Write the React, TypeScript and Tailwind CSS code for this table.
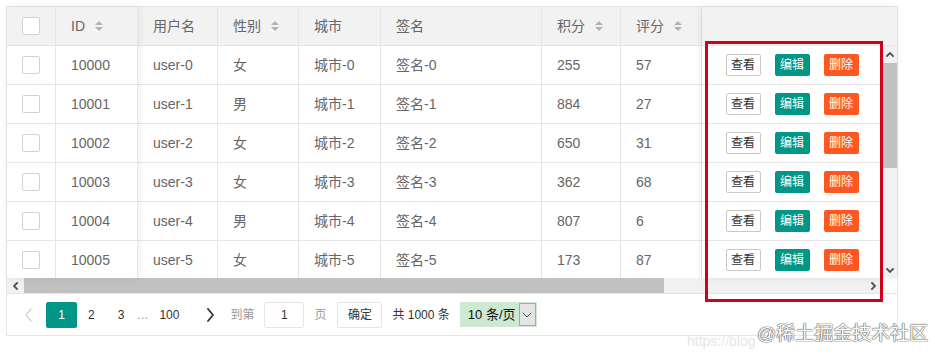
import React from 'react'

interface UserRow {
    id: number;
    sex: string;
    score: number;
    rating: number;
}

const rows: UserRow[] = [
    { id: 10000, sex: '女', score: 255, rating: 57 },
    { id: 10001, sex: '男', score: 884, rating: 27 },
    { id: 10002, sex: '女', score: 650, rating: 31 },
    { id: 10003, sex: '女', score: 362, rating: 68 },
    { id: 10004, sex: '男', score: 807, rating: 6 },
    { id: 10005, sex: '女', score: 173, rating: 87 },
]

function SortIcon() {
    return (
        <svg width="8" height="12" viewBox="0 0 8 12" className="ml-[10px] shrink-0">
            <polygon points="0,5 4,1 8,5" fill="#b2b2b2" />
            <polygon points="0,7 4,11 8,7" fill="#b2b2b2" />
        </svg>
    )
}

function Checkbox() {
    return <span className="block w-[18px] h-[18px] rounded-[2px] border border-[#d2d2d2] bg-white" />
}

function Cell({ w, children, last }: { w: string; children?: React.ReactNode; last?: boolean }) {
    return (
        <div className={`${w} h-full flex items-center px-[15px] shrink-0 ${last ? '' : 'border-r border-[#e6e6e6]'}`}>
            {children}
        </div>
    )
}

function Chevron({ dir, color, width }: { dir: 'left' | 'right' | 'up' | 'down'; color: string; width: number }) {
    const d = {
        left: 'M7 1 L2 7 L7 13',
        right: 'M2 1 L7 7 L2 13',
        up: 'M1 6 L5 2 L9 6',
        down: 'M1 2 L5 6 L9 2',
    }[dir]
    const box = dir === 'left' || dir === 'right' ? '0 0 9 14' : '0 0 10 8'
    return (
        <svg viewBox={box} className={dir === 'left' || dir === 'right' ? 'w-[9px] h-[14px]' : 'w-[10px] h-[8px]'}>
            <path d={d} fill="none" stroke={color} strokeWidth={width} strokeLinecap="round" strokeLinejoin="round" />
        </svg>
    )
}

// small arrows of the native scrollbars
function ScrollArrow({ dir }: { dir: 'left' | 'right' | 'up' | 'down' }) {
    const d = {
        left: 'M5 1 L2 4 L5 7',
        right: 'M2 1 L5 4 L2 7',
        up: 'M1 5 L4 2 L7 5',
        down: 'M1 3 L4 6 L7 3',
    }[dir]
    return (
        <svg viewBox="0 0 8 8" className="w-[8px] h-[8px]">
            <path d={d} fill="none" stroke="#505050" strokeWidth={1.8} strokeLinecap="square" />
        </svg>
    )
}

export default function App() {
    return (
        <div className="relative w-[935px] h-[359px] bg-white overflow-hidden font-['Liberation_Sans','Noto_Sans_CJK_SC',sans-serif] text-[14px] text-[#666]">
            <div className="relative ml-[6px] mt-[6px] w-[892px] border border-[#e6e6e6]">

                {/* table: fixed left, scrolling middle, fixed right */}
                <div className="flex h-[271px]">
                    <div className="relative z-10 w-[131px] shrink-0 bg-white shadow-[1px_0_8px_rgba(0,0,0,0.08)]">
                        <div className="flex h-[39px] bg-[#f2f2f2] border-b border-[#e6e6e6]">
                            <div className="w-[49px] h-full flex items-center justify-center border-r border-[#e6e6e6]"><Checkbox /></div>
                            <Cell w="w-[82px]"><span>ID</span><SortIcon /></Cell>
                        </div>
                        <div className="h-[232px] overflow-hidden">
                            {rows.map((r) => (
                                <div key={r.id} className="flex h-[39px] border-b border-[#e6e6e6]">
                                    <div className="w-[49px] h-full flex items-center justify-center border-r border-[#e6e6e6]"><Checkbox /></div>
                                    <Cell w="w-[82px]">{r.id}</Cell>
                                </div>
                            ))}
                        </div>
                    </div>

                    <div className="w-[564px] shrink-0 bg-white">
                        <div className="flex h-[39px] bg-[#f2f2f2] border-b border-[#e6e6e6]">
                            <Cell w="w-[80px]">用户名</Cell>
                            <Cell w="w-[81px]"><span>性别</span><SortIcon /></Cell>
                            <Cell w="w-[82px]">城市</Cell>
                            <Cell w="w-[161px]">签名</Cell>
                            <Cell w="w-[79px]"><span>积分</span><SortIcon /></Cell>
                            <Cell w="w-[81px]"><span>评分</span><SortIcon /></Cell>
                        </div>
                        <div className="h-[232px] overflow-hidden">
                            {rows.map((r, i) => (
                                <div key={r.id} className="flex h-[39px] border-b border-[#e6e6e6]">
                                    <Cell w="w-[80px]">user-{i}</Cell>
                                    <Cell w="w-[81px]">{r.sex}</Cell>
                                    <Cell w="w-[82px]">城市-{i}</Cell>
                                    <Cell w="w-[161px]">签名-{i}</Cell>
                                    <Cell w="w-[79px]">{r.score}</Cell>
                                    <Cell w="w-[81px]">{r.rating}</Cell>
                                </div>
                            ))}
                        </div>
                    </div>

                    <div className="relative z-10 w-[195px] shrink-0 bg-white shadow-[-1px_0_8px_rgba(0,0,0,0.08)]">
                        <div className="h-[39px] bg-[#f2f2f2] border-b border-[#e6e6e6]" />
                        <div className="flex h-[232px]">
                            <div className="w-[180px] overflow-hidden">
                                {rows.map((r) => (
                                    <div key={r.id} className="flex h-[39px] items-center justify-center gap-[14px] border-b border-[#e6e6e6] text-[12px]">
                                        <span className="w-[35px] h-[22px] flex items-center justify-center rounded-[2px] border border-[#c9c9c9] bg-white text-[#333]">查看</span>
                                        <span className="w-[35px] h-[22px] flex items-center justify-center rounded-[2px] bg-[#009688] text-white">编辑</span>
                                        <span className="w-[35px] h-[22px] flex items-center justify-center rounded-[2px] bg-[#ff5722] text-white">删除</span>
                                    </div>
                                ))}
                            </div>
                            {/* vertical scrollbar */}
                            <div className="w-[15px] h-full flex flex-col bg-[#f1f1f1]">
                                <div className="h-[17px] flex items-center justify-center"><ScrollArrow dir="up" /></div>
                                <div className="h-[105px] bg-[#c1c1c1]" />
                                <div className="flex-1" />
                                <div className="h-[17px] flex items-center justify-center"><ScrollArrow dir="down" /></div>
                            </div>
                        </div>
                    </div>
                </div>

                {/* horizontal scrollbar */}
                <div className="flex h-[15px]">
                    <div className="w-[875px] flex bg-[#f1f1f1]">
                        <div className="w-[17px] flex items-center justify-center"><ScrollArrow dir="left" /></div>
                        <div className="w-[640px] bg-[#c1c1c1]" />
                        <div className="flex-1" />
                        <div className="w-[17px] flex items-center justify-center"><ScrollArrow dir="right" /></div>
                    </div>
                    <div className="w-[15px] bg-white" />
                </div>

                {/* pagination */}
                <div className="h-[42px] border-t border-[#e6e6e6] flex items-center text-[12px] text-[#333]">
                    <span className="ml-[17px]"><Chevron dir="left" color="#d2d2d2" width={1.3} /></span>
                    <span className="ml-[13px] w-[31px] h-[26px] flex items-center justify-center rounded-[2px] bg-[#009688] text-white">1</span>
                    <span className="ml-[11px]">2</span>
                    <span className="ml-[23px]">3</span>
                    <span className="ml-[12px] text-[#999]">…</span>
                    <span className="ml-[11px]">100</span>
                    <span className="ml-[27px]"><Chevron dir="right" color="#333" width={1.8} /></span>
                    <span className="ml-[15px] text-[#999]">到第</span>
                    <span className="ml-[10px] w-[40px] h-[26px] flex items-center justify-center rounded-[2px] border border-[#e6e6e6]">1</span>
                    <span className="ml-[10px] text-[#999]">页</span>
                    <span className="ml-[11px] w-[45px] h-[26px] flex items-center justify-center rounded-[2px] border border-[#e6e6e6] text-[#333]">确定</span>
                    <span className="ml-[10px]">共 1000 条</span>
                    <span className="ml-[10px] w-[77px] h-[25px] flex items-center justify-between bg-[#cde9d2] text-[#111]">
                        <span className="ml-[8px] text-[13px]">10 条/页</span>
                        <span className="w-[17px] h-[23px] mr-[1px] flex items-center justify-center border border-[#a8a8a8] bg-[#e4e4e4]">
                            <Chevron dir="down" color="#555" width={1} />
                        </span>
                    </span>
                </div>

                {/* red highlight annotation */}
                <div className="absolute left-[698px] top-[34px] w-[178px] h-[261px] border-[3px] border-[#d0021b] pointer-events-none z-20" />
            </div>

            {/* watermark */}
            <div className="absolute left-[687px] top-[331px] text-[14px] text-[#e6e6e6] whitespace-nowrap">https://blog</div>
            <div className="absolute left-[757px] top-[320px] text-[19px] text-white whitespace-nowrap [text-shadow:0_0_1px_#555,0_0_1px_#555,0_0_1px_#555]">@稀土掘金技术社区</div>
        </div>
    )
}
